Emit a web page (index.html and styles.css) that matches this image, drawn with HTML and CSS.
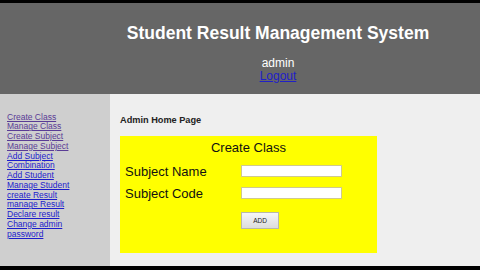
FILE: index.html
```html
<!DOCTYPE html>
<html>
<head>
<meta charset="utf-8">
<title>Student Result Management System</title>
<link rel="stylesheet" href="styles.css">
</head>
<body>
<div class="page">
  <header class="header">
    <h1 class="title">Student Result Management System</h1>
    <div class="user">admin</div>
    <a class="logout" href="#">Logout</a>
  </header>
  <div class="body">
    <nav class="sidebar">
      <a class="visited" href="#">Create Class</a>
      <a class="visited" href="#">Manage Class</a>
      <a class="visited" href="#">Create Subject</a>
      <a class="visited" href="#">Manage Subject</a>
      <a href="#">Add Subject Combination</a>
      <a href="#">Add Student</a>
      <a href="#">Manage Student</a>
      <a href="#">create Result</a>
      <a href="#">manage Result</a>
      <a href="#">Declare result</a>
      <a href="#">Change admin password</a>
    </nav>
    <main class="main">
      <h2 class="page-heading">Admin Home Page</h2>
      <form class="panel">
        <div class="panel-title">Create Class</div>
        <div class="form-grid">
          <label class="label">Subject Name</label>
          <input class="field" type="text">
          <label class="label">Subject Code</label>
          <input class="field" type="text">
          <span></span>
          <div class="btn-cell"><button class="btn" type="button">ADD</button></div>
        </div>
      </form>
    </main>
  </div>
</div>
</body>
</html>
```

FILE: styles.css
```css
html, body {
  margin: 0;
  padding: 0;
  background: #000;
  font-family: "Liberation Sans", Arial, sans-serif;
}
.page {
  margin-top: 3px;
  height: 263px;
  display: flex;
  flex-direction: column;
  overflow: hidden;
}
.header {
  height: 91px;
  flex: none;
  background: #666666;
  box-sizing: border-box;
  padding: 20px 0 0 76px;
  display: flex;
  flex-direction: column;
  align-items: center;
  text-align: center;
}
.title {
  margin: 0;
  font-size: 17.5px;
  line-height: 20px;
  font-weight: bold;
  color: #fff;
}
.user {
  margin-top: 14px;
  font-size: 12px;
  line-height: 13px;
  color: #fff;
}
.logout {
  font-size: 12px;
  line-height: 13px;
  color: #2020c8;
  text-decoration: underline;
}
.body {
  flex: 1;
  display: flex;
  min-height: 0;
}
.sidebar {
  width: 110px;
  flex: none;
  background: #cfcfcf;
  box-sizing: border-box;
  padding: 18.5px 0 0 7px;
}
.sidebar a {
  display: block;
  width: 72px;
  font-size: 8.5px;
  line-height: 9.75px;
  color: #1c1ccc;
  text-decoration: underline;
}
.sidebar a.visited {
  color: #5a3c96;
}
.main {
  flex: 1;
  background: #efefef;
  box-sizing: border-box;
  padding: 21px 0 0 10px;
}
.page-heading {
  margin: 0;
  font-size: 9.2px;
  line-height: 11px;
  font-weight: bold;
  color: #222;
}
.panel {
  margin: 9.7px 0 0 0;
  width: 257px;
  height: 117px;
  background: #ffff00;
  box-sizing: border-box;
  padding: 4px 0 0 5px;
}
.panel-title {
  font-size: 13px;
  line-height: 15px;
  text-align: center;
  color: #111;
  padding-right: 5px;
}
.form-grid {
  margin-top: 5.5px;
  display: grid;
  grid-template-columns: 116px 101px;
  grid-auto-rows: 22px;
  align-items: center;
}
.label {
  font-size: 13px;
  line-height: 15px;
  color: #111;
}
.field {
  width: 101px;
  height: 12px;
  box-sizing: border-box;
  margin: 0;
  padding: 0;
  border: 1px solid #cfc98e;
  background: #fff;
}
.btn-cell {
  align-self: start;
  padding-top: 5px;
}
.btn {
  width: 38px;
  height: 17px;
  margin: 0;
  padding: 0;
  border: 1px solid #b8b8a8;
  background: linear-gradient(#f6f6f6, #dcdcdc);
  font-family: "Liberation Sans", Arial, sans-serif;
  font-size: 6.5px;
  color: #222;
}
```
